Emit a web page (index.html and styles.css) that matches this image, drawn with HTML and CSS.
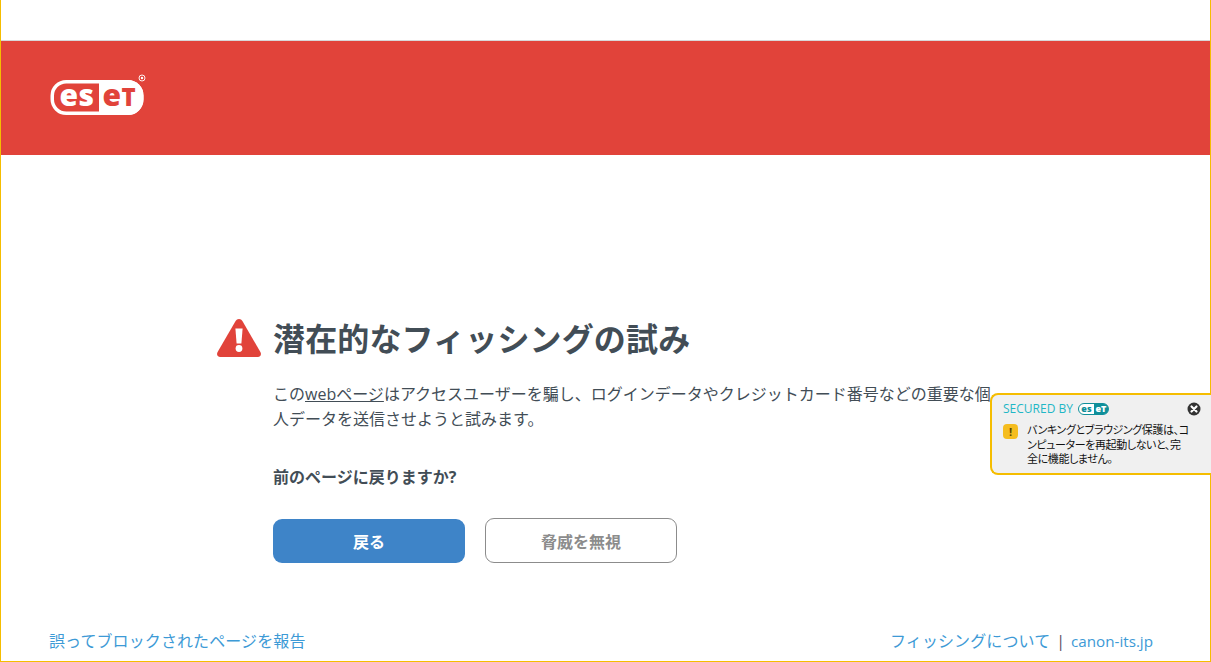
FILE: index.html
```html
<!DOCTYPE html>
<html lang="ja">
<head>
<meta charset="utf-8">
<title>ESET</title>
<link rel="stylesheet" href="styles.css">
</head>
<body>
<div class="frame">
  <div class="top-gap"></div>
  <header class="banner">
    <svg class="logo" viewBox="0 0 100 44" width="100" height="44">
      <rect x="4.250" y="7.750" width="89.500" height="31.500" rx="14" fill="#e1433a" stroke="#fff" stroke-width="3.500"/>
      <path d="M51 6h29a15.500 15.500 0 0 1 15.500 15.500v4a15.500 15.500 0 0 1-15.500 15.500H51z" fill="#fff"/>
      <text x="11.500" y="31.500" class="logo-es">es</text>
      <text x="54.500" y="32" class="logo-et">e<tspan class="logo-t">T</tspan></text>
      <circle cx="94" cy="4" r="3" fill="none" stroke="#fff" stroke-width="0.900"/>
      <circle cx="94" cy="4" r="1.200" fill="#fff"/>
    </svg>
  </header>
  <main class="content">
    <div class="title-row">
      <svg class="warn" viewBox="0 0 44 38" width="44" height="38">
        <path d="M22 0c1.500 0 2.600.7 3.400 2l18 31c1.300 2.400.2 5-2.600 5H3.200c-2.800 0-3.900-2.600-2.600-5l18-31c.8-1.300 1.900-2 3.400-2z" fill="#e1433a"/>
        <path d="M18.400 9.500h7.200l-1.200 15h-4.800z" fill="#fff"/>
        <circle cx="22" cy="29.500" r="3.400" fill="#fff"/>
      </svg>
      <h1>潜在的なフィッシングの試み</h1>
    </div>
    <div class="body-col">
      <p class="desc">この<u>webページ</u>はアクセスユーザーを騙し、ログインデータやクレジットカード番号などの重要な個人データを送信させようと試みます。</p>
      <p class="question">前のページに戻りますか?</p>
      <div class="actions">
        <button class="btn btn-primary">戻る</button>
        <button class="btn btn-ghost">脅威を無視</button>
      </div>
    </div>
  </main>
  <footer class="foot">
    <a class="link">誤ってブロックされたページを報告</a>
    <div class="foot-right">
      <a class="link">フィッシングについて</a>
      <span class="sep">|</span>
      <a class="link link-domain">canon-its.jp</a>
    </div>
  </footer>
  <aside class="toast">
    <div class="toast-head">
      <span class="secured">SECURED BY</span>
      <span class="mini-logo"><span class="mini-es">es</span><b class="mini-et">eT</b></span>
      <svg class="close" viewBox="0 0 14 14" width="14" height="14">
        <circle cx="7" cy="7" r="6.500" fill="#333"/>
        <path d="M4.500 4.500l5 5M9.500 4.500l-5 5" stroke="#fff" stroke-width="2.200" stroke-linecap="round"/>
      </svg>
    </div>
    <div class="toast-body">
      <span class="alert">!</span>
      <p>バンキングとブラウジング保護は、コンピューターを再起動しないと、完全に機能しません。</p>
    </div>
  </aside>
</div>
</body>
</html>
```

FILE: styles.css
```css
* { box-sizing: border-box; }
html, body { margin: 0; padding: 0; height: 100%; overflow: hidden; }
body {
  font-family: "Open Sans", "Noto Sans CJK JP", sans-serif;
  color: #424d56;
  background: #fff;
}
.frame {
  position: relative;
  height: 662px;
  border: 1px solid #f5bd00;
  border-top: 0;
  display: flex;
  flex-direction: column;
}
.top-gap { height: 41px; flex: none; border-bottom: 1px solid #d8d8d8; }
.banner {
  height: 114px;
  background: #e1433a;
  padding: 33px 0 0 47px;
  flex: none;
}
.logo { display: block; }
.logo-es, .logo-et {
  font-family: "Open Sans", sans-serif;
  font-weight: 800;
}
.logo-es { fill: #fff; font-size: 30px; letter-spacing: 0.5px; }
.logo-et { fill: #e1433a; font-size: 30px; letter-spacing: 0.5px; }
.logo-t { font-size: 24px; }
.content {
  flex: 1;
  padding: 164px 0 0 216px;
}
.title-row {
  display: flex;
  align-items: center;
  gap: 12px;
  height: 40px;
}
.warn { flex: none; align-self: flex-start; }
h1 {
  margin: 0;
  font-size: 32px;
  line-height: 40px;
  font-weight: 700;
  letter-spacing: 0.15px;
  white-space: nowrap;
}
.body-col { margin: 0 0 0 56px; width: 720px; }
.desc {
  margin: 23px 0 0;
  font-size: 16px;
  line-height: 24.500px;
}
.question {
  margin: 34px 0 0;
  font-size: 16px;
  line-height: 25px;
  font-weight: 700;
}
.actions {
  display: flex;
  gap: 20px;
  margin-top: 29px;
}
.btn {
  width: 192px;
  height: 44px;
  border-radius: 9px;
  font-family: inherit;
  font-size: 16px;
  font-weight: 700;
  padding: 0;
}
.btn-primary { background: #3e84c8; color: #fff; border: 0; }
.btn-ghost { background: #fff; color: #8c8c8c; border: 1px solid #8c8c8c; margin-top: -1px; height: 45px; }
.foot {
  display: flex;
  justify-content: space-between;
  align-items: center;
  padding: 0 57px 7px 48px;
  font-size: 16px;
  line-height: 26px;
}
.link { color: #3d9ad6; letter-spacing: 0.1px; }
.link-domain { font-size: 15.200px; letter-spacing: 0; }
.foot-right { display: flex; gap: 6px; }
.sep { color: #5a5060; }
.toast {
  position: absolute;
  left: 989px;
  top: 393px;
  width: 221px;
  height: 82px;
  background: #f0f0f0;
  border: 2px solid #f5bd00;
  border-right: 0;
  border-radius: 8px 0 0 8px;
  padding: 6px 10px 0 11px;
  color: #111;
}
.toast-head { display: flex; align-items: center; height: 16px; }
.secured { font-size: 12px; color: #1fb7c6; line-height: 16px; }
.mini-logo {
  margin-left: 5px;
  display: flex;
  border: 1.500px solid #0f8f9a;
  border-radius: 6px;
  height: 12px;
  width: 31px;
  font-size: 9px;
  line-height: 9px;
  font-weight: 800;
  background: #fff;
  color: #0f8f9a;
}
.mini-es { width: 15px; text-align: center; }
.mini-et { flex: 1; background: #0f8f9a; color: #fff; font-weight: 800; text-align: center; border-radius: 0 4px 4px 0; }
.close { margin-left: auto; }
.toast-body { display: flex; margin-top: 6px; }
.alert {
  flex: none;
  width: 15px;
  height: 15px;
  border-radius: 4px;
  background: #f5bd1f;
  color: #5a4500;
  font-size: 11px;
  font-weight: 700;
  line-height: 15px;
  text-align: center;
  margin-top: 1px;
}
.toast-body p {
  margin: 0 0 0 9px;
  font-size: 11px;
  line-height: 14.500px;
  letter-spacing: -0.400px;
  width: 163px;
  font-feature-settings: "palt";
}
```
